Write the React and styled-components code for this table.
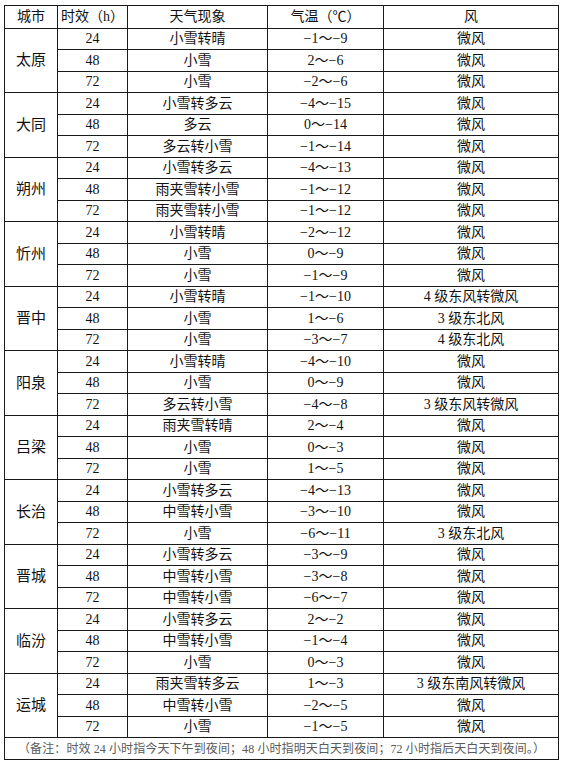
import React from 'react'
import styled, { createGlobalStyle } from 'styled-components'

const GlobalStyle = createGlobalStyle`
  html, body {
    margin: 0;
    padding: 0;
    background: #fff;
  }
  body {
    font-family: "Liberation Serif", "Noto Sans CJK SC", serif;
    color: #111;
  }
`

const Page = styled.div`
  padding: 5px 0 0 4px;
  width: 562px;
  box-sizing: border-box;
`

const Table = styled.table`
  border-collapse: collapse;
  table-layout: fixed;
  width: 554px;
  font-size: 14px;
  line-height: 1;

  th, td {
    border: 1px solid #1a1a1a;
    padding: 0;
    text-align: center;
    vertical-align: middle;
    font-weight: normal;
    white-space: nowrap;
  }
`

const HeadRow = styled.tr`
  height: 23px;
`

const Row = styled.tr`
  height: ${p => p.$h}px;
`

const CityCell = styled.td`
  font-size: 15px;
`

const NoteCell = styled.td`
  height: 21px;
  color: #5a5a5a;
  font-size: 12px;
  letter-spacing: 0.1px;
`

const cols = [53, 70, 140, 116, 175]

const data = [
  ['太原', [
    ['小雪转晴', '−1～−9', '微风'],
    ['小雪', '2～−6', '微风'],
    ['小雪', '−2～−6', '微风']
  ]],
  ['大同', [
    ['小雪转多云', '−4～−15', '微风'],
    ['多云', '0～−14', '微风'],
    ['多云转小雪', '−1～−14', '微风']
  ]],
  ['朔州', [
    ['小雪转多云', '−4～−13', '微风'],
    ['雨夹雪转小雪', '−1～−12', '微风'],
    ['雨夹雪转小雪', '−1～−12', '微风']
  ]],
  ['忻州', [
    ['小雪转晴', '−2～−12', '微风'],
    ['小雪', '0～−9', '微风'],
    ['小雪', '−1～−9', '微风']
  ]],
  ['晋中', [
    ['小雪转晴', '−1～−10', '4 级东风转微风'],
    ['小雪', '1～−6', '3 级东北风'],
    ['小雪', '−3～−7', '4 级东北风']
  ]],
  ['阳泉', [
    ['小雪转晴', '−4～−10', '微风'],
    ['小雪', '0～−9', '微风'],
    ['多云转小雪', '−4～−8', '3 级东风转微风']
  ]],
  ['吕梁', [
    ['雨夹雪转晴', '2～−4', '微风'],
    ['小雪', '0～−3', '微风'],
    ['小雪', '1～−5', '微风']
  ]],
  ['长治', [
    ['小雪转多云', '−4～−13', '微风'],
    ['中雪转小雪', '−3～−10', '微风'],
    ['小雪', '−6～−11', '3 级东北风']
  ]],
  ['晋城', [
    ['小雪转多云', '−3～−9', '微风'],
    ['中雪转小雪', '−3～−8', '微风'],
    ['中雪转小雪', '−6～−7', '微风']
  ]],
  ['临汾', [
    ['小雪转多云', '2～−2', '微风'],
    ['中雪转小雪', '−1～−4', '微风'],
    ['小雪', '0～−3', '微风']
  ]],
  ['运城', [
    ['雨夹雪转多云', '1～−3', '3 级东南风转微风'],
    ['中雪转小雪', '−2～−5', '微风'],
    ['小雪', '−1～−5', '微风']
  ]]
]

const hours = ['24', '48', '72']

const App = () => {
  let n = 0
  return (
    <Page>
      <GlobalStyle />
      <Table>
        <colgroup>
          {cols.map((w, i) => <col key={i} style={{ width: w }} />)}
        </colgroup>
        <thead>
          <HeadRow>
            <th>城市</th>
            <th>时效（h）</th>
            <th>天气现象</th>
            <th>气温（℃）</th>
            <th>风</th>
          </HeadRow>
        </thead>
        <tbody>
          {data.map(([city, rows]) =>
            rows.map((r, i) => {
              const h = n++ % 2 === 0 ? 21 : 22
              return (
                <Row key={city + i} $h={h}>
                  {i === 0 && <CityCell rowSpan={3}>{city}</CityCell>}
                  <td>{hours[i]}</td>
                  <td>{r[0]}</td>
                  <td>{r[1]}</td>
                  <td>{r[2]}</td>
                </Row>
              )
            })
          )}
          <tr>
            <NoteCell colSpan={5}>
              （备注：时效 24 小时指今天下午到夜间；48 小时指明天白天到夜间；72 小时指后天白天到夜间。）
            </NoteCell>
          </tr>
        </tbody>
      </Table>
    </Page>
  )
}

export default App
